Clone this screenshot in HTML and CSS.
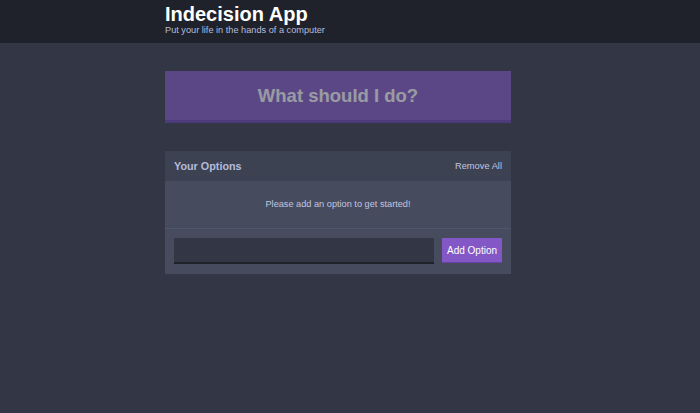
FILE: index.html
```html
<!DOCTYPE html>
<html lang="en">
<head>
<meta charset="UTF-8">
<meta name="viewport" content="width=device-width, initial-scale=1.0">
<title>Indecision App</title>
<link rel="stylesheet" href="styles.css">
</head>
<body>

<div class="header">
  <div class="container">
    <h1 class="header__title">Indecision App</h1>
    <h2 class="header__subtitle">Put your life in the hands of a computer</h2>
  </div>
</div>

<div class="container">
  <button class="big-button" disabled>What should I do?</button>

  <div class="widget">
    <div class="widget-header">
      <h3 class="widget-header__title">Your Options</h3>
      <button class="button--link">Remove All</button>
    </div>
    <p class="widget__message">Please add an option to get started!</p>
    <form class="add-option">
      <input class="add-option__input" type="text" name="option">
      <button class="button" type="button">Add Option</button>
    </form>
  </div>
</div>

</body>
</html>
```

FILE: styles.css
```css
* {
  box-sizing: border-box;
}
body {
  margin: 0;
  padding-right: 24px;
  font-family: "Liberation Sans", Arial, sans-serif;
  background: #333745;
  color: #fff;
  min-height: 100vh;
}
h1, h2, h3, p {
  margin: 0;
}
button {
  font-family: inherit;
}
.container {
  width: 346px;
  margin: 0 auto;
}
.header {
  background: #20222b;
  height: 43px;
  padding-top: 4px;
  margin-right: -24px;
  padding-right: 24px;
  margin-bottom: 28px;
}
.header__title {
  font-size: 20px;
  line-height: 20px;
  font-weight: bold;
}
.header__subtitle {
  font-size: 9.2px;
  line-height: 12px;
  font-weight: normal;
  color: #b4bbdc;
}
.big-button {
  display: block;
  width: 100%;
  height: 52px;
  background: #8357c5;
  border: none;
  border-bottom: 3px solid #6a3fad;
  color: #fff;
  font-size: 18.5px;
  font-weight: bold;
  padding: 0;
  margin-bottom: 28px;
}
.big-button:disabled {
  opacity: 0.5;
}
.widget {
  background: #464b5e;
}
.widget-header {
  background: #3c4251;
  height: 30px;
  padding: 0 9px;
  display: flex;
  justify-content: space-between;
  align-items: center;
}
.widget-header__title {
  font-size: 10.8px;
  font-weight: bold;
  color: #b4bbdc;
}
.button--link {
  background: none;
  border: none;
  padding: 0;
  font-size: 9.3px;
  color: #c0c5e2;
}
.widget__message {
  height: 48px;
  line-height: 47px;
  text-align: center;
  font-size: 9.2px;
  color: #c0c5e2;
  border-bottom: 1px solid #50566b;
}
.add-option {
  display: flex;
  gap: 8px;
  padding: 9px 9px 10px;
}
.add-option__input {
  flex: 1;
  height: 26px;
  background: #333745;
  border: none;
  border-bottom: 2px solid #20222b;
  color: #a5afd7;
}
.button {
  background: #8357c5;
  border: none;
  border-bottom: 1px solid #6a3fad;
  color: #fff;
  font-size: 10px;
  height: 25px;
  padding: 0;
  width: 60px;
  white-space: nowrap;
}
```
